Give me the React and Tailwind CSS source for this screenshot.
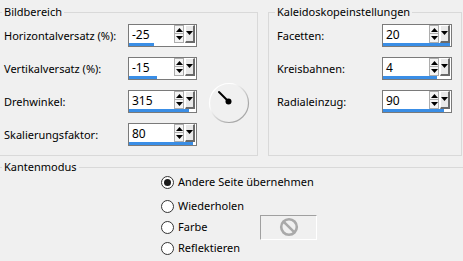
import React from "react"

const font = { fontFamily: '"Noto Sans", "Open Sans", sans-serif' }

function Arrow({ up }) {
  return (
    <svg width="7" height="4" viewBox="0 0 7 4" className="block">
      <path d={up ? "M0 4 L3.5 0 L7 4 Z" : "M0 0 L3.5 4 L7 0 Z"} fill="#000" />
    </svg>
  )
}

function SpinField({ value, bar, wide }) {
  return (
    <div className={`flex flex-col border border-[#7a7a7a] bg-white h-[23px] ${wide ? "w-[70px]" : "w-[69px]"}`}>
      <div className="flex h-[18px] items-stretch">
        <span className="flex-1 pl-[3px] pt-[1px] text-[12px] leading-[18px] text-black">{value}</span>
        <div className="flex w-[10px] flex-col">
          <div className="flex h-[9px] items-center justify-center border border-[#adadad] bg-[#f4f4f4]">
            <Arrow up />
          </div>
          <div className="flex h-[9px] items-center justify-center border border-t-0 border-[#adadad] bg-[#f4f4f4]">
            <Arrow />
          </div>
        </div>
        <div className="ml-[1px] mr-[1px] flex w-[10px] justify-center border-t border-l border-r-2 border-b-2 border-t-white border-l-white border-r-[#6a6a6a] border-b-[#6a6a6a] bg-[#e9e9e9] pt-[5px]">
          <Arrow />
        </div>
      </div>
      <div className="h-[3px]">
        <div className="h-[3px] bg-[#3a8ee6]" style={{ width: bar }} />
      </div>
    </div>
  )
}

function Dial() {
  return (
    <svg width="42" height="42" viewBox="0 0 42 42" className="block">
      <defs>
        <linearGradient id="dialEdge" x1="0" y1="0" x2="1" y2="1">
          <stop offset="0.3" stopColor="#ffffff" />
          <stop offset="0.75" stopColor="#a9a9a9" />
        </linearGradient>
      </defs>
      <circle cx="21" cy="21" r="19.5" fill="#f0f0f0" stroke="url(#dialEdge)" strokeWidth="1.2" />
      <line x1="11" y1="10" x2="20.5" y2="19.5" stroke="#000" strokeWidth="2" strokeLinecap="round" />
      <circle cx="20.5" cy="19.5" r="3" fill="#000" />
    </svg>
  )
}

function Radio({ checked, label }) {
  return (
    <span className="flex items-center gap-[4px]">
      <span className="flex h-[13px] w-[13px] items-center justify-center rounded-full border border-[#333] bg-white">
        {checked && <span className="h-[7px] w-[7px] rounded-full bg-[#1a1a1a]" />}
      </span>
      <span className="text-[11px] leading-[14px] text-black">{label}</span>
    </span>
  )
}

function NoIcon() {
  return (
    <svg width="20" height="20" viewBox="0 0 20 20" className="block">
      <circle cx="10" cy="10" r="7.8" fill="none" stroke="#a9a9a9" strokeWidth="2.6" />
      <line x1="4.8" y1="4.8" x2="15.2" y2="15.2" stroke="#a9a9a9" strokeWidth="2.6" />
    </svg>
  )
}

const leftRows = [
  { label: "Horizontalversatz (%):", value: "-25", bar: 25 },
  { label: "Vertikalversatz (%):", value: "-15", bar: 28 },
  { label: "Drehwinkel:", value: "315", bar: 60 },
  { label: "Skalierungsfaktor:", value: "80", bar: 64 },
]

const rightRows = [
  { label: "Facetten:", value: "20", bar: 67 },
  { label: "Kreisbahnen:", value: "4", bar: 54 },
  { label: "Radialeinzug:", value: "90", bar: 61 },
]

export default function App() {
  return (
    <div className="h-[261px] w-[463px] overflow-hidden bg-[#f0f0f0] text-black" style={font}>
      <div className="flex gap-[10px] pt-[4px]">
        <fieldset className="ml-[-1px] h-[152px] w-[259px] border border-[#d9d9d9]">
          <legend className="ml-[2px] px-[2px] text-[11px] leading-[16px]">Bildbereich</legend>
          <div className="mt-[4px] grid grid-cols-[124px_69px_auto] gap-y-[10px] pl-[4px]">
            {leftRows.map((r) => (
              <React.Fragment key={r.label}>
                <span className="col-start-1 text-[11px] leading-[23px]">{r.label}</span>
                <div className="col-start-2">
                  <SpinField value={r.value} bar={r.bar} />
                </div>
              </React.Fragment>
            ))}
            <div className="col-start-3 row-start-2 row-span-3 mt-[3px] ml-[11px] self-center">
              <Dial />
            </div>
          </div>
        </fieldset>
        <fieldset className="h-[152px] w-[194px] border border-[#d9d9d9]">
          <legend className="ml-[6px] px-[2px] text-[11px] leading-[16px]">Kaleidoskopeinstellungen</legend>
          <div className="mt-[4px] flex flex-col gap-[10px] pl-[8px]">
            {rightRows.map((r) => (
              <div key={r.label} className="flex items-center">
                <span className="w-[105px] text-[11px] leading-[23px]">{r.label}</span>
                <SpinField value={r.value} bar={r.bar} wide />
              </div>
            ))}
          </div>
        </fieldset>
      </div>
      <fieldset className="ml-[-1px] mt-[3px] h-[140px] w-[465px] border border-[#d9d9d9]">
        <legend className="ml-[2px] px-[2px] text-[11px] leading-[16px]">Kantenmodus</legend>
        <div className="flex flex-col pl-[161px]">
          <div className="flex h-[14px] items-center">
            <Radio checked label="Andere Seite übernehmen" />
          </div>
          <div className="mt-[10px] flex h-[14px] items-center">
            <Radio label="Wiederholen" />
          </div>
          <div className="mt-[7px] flex h-[14px] items-center">
            <span className="w-[99px]">
              <Radio label="Farbe" />
            </span>
            <div className="flex h-[25px] w-[57px] shrink-0 items-center justify-center border border-t-[#a0a0a0] border-l-[#a0a0a0] border-b-white border-r-white">
              <NoIcon />
            </div>
          </div>
          <div className="mt-[7px] flex h-[14px] items-center">
            <Radio label="Reflektieren" />
          </div>
        </div>
      </fieldset>
    </div>
  )
}
